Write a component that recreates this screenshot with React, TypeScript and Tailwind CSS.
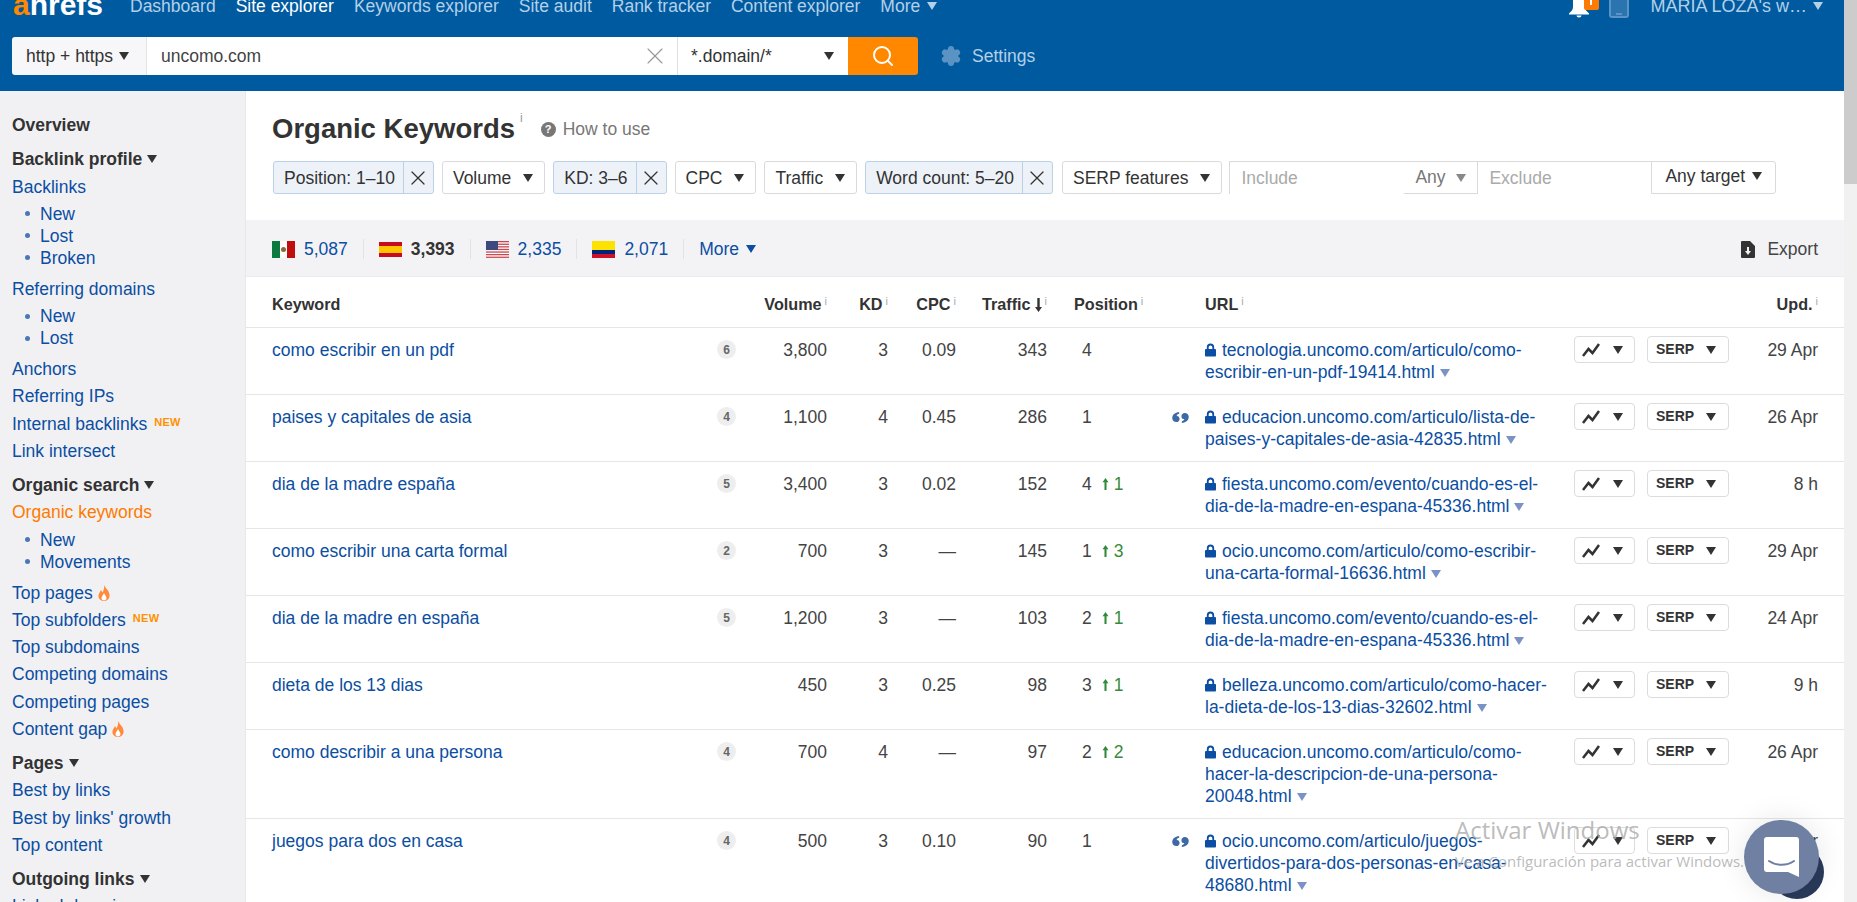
import { Search, X, Settings } from "lucide-react";

const font = "font-['Liberation_Sans',Arial,sans-serif]";

function Caret({ className = "" }: { className?: string }) {
  return (
    <svg viewBox="0 0 10 8" className={`inline-block w-[10px] h-[8px] fill-current ${className}`}>
      <path d="M0 0h10L5 8z" />
    </svg>
  );
}

function Info() {
  return <sup className="text-[11px] font-normal text-[#aaa] ml-[3px] -top-[5px]">i</sup>;
}

function Lock() {
  return (
    <svg viewBox="0 0 12 14" className="inline-block w-[11px] h-[14px] mr-[6px] -mt-[3px] align-middle fill-[#0b4ea2]">
      <path fillRule="evenodd" d="M2 6V4a4 4 0 0 1 8 0v2h1a1 1 0 0 1 1 1v6a1 1 0 0 1-1 1H1a1 1 0 0 1-1-1V7a1 1 0 0 1 1-1zm2 0h4V4a2 2 0 0 0-4 0z" />
    </svg>
  );
}

function Quote() {
  return (
    <svg viewBox="0 0 18 12" className="w-[17px] h-[11px] mt-[6px] fill-[#3d6aa5]">
      <path d="M7.500 0v2C5.800 2.300 5 3.200 4.900 4.300 6.600 4.200 8 5.500 8 7.500S6.500 11 4.300 11 0 9.300 0 6.800C0 3 3 .4 7.500 0zM10.500 12v-2c1.700-.3 2.500-1.200 2.600-2.300-1.700.1-3.100-1.200-3.100-3.200S11.500 1 13.700 1 18 2.700 18 5.200C18 9 15 11.600 10.500 12z" />
    </svg>
  );
}

function Fire() {
  return (
    <svg viewBox="0 0 12 16" className="ml-[5px] w-[12px] h-[16px]">
      <path fill="#ff8a3c" d="M6 0c1 3 5 5 5.500 9.500C12 13.500 9.500 16 6 16S0 13.500.5 10C1 7.500 2.500 6.500 3 5c.8 1 1 2 1.500 2.500C5.500 5.500 6.500 3 6 0z" />
      <path fill="#fff" d="M6 8c.5 2 2.500 3 2.500 5 0 1.500-1 2.500-2.500 2.500S3.500 14.500 3.500 13C3.500 11 5.500 10 6 8z" />
    </svg>
  );
}

const nav = ["Dashboard", "Site explorer", "Keywords explorer", "Site audit", "Rank tracker", "Content explorer"];

function TopBar() {
  return (
    <header className="h-[91px] bg-[#005aa0] shrink-0 relative">
      <div className="h-[37px] flex items-start">
        <div className="w-[130px] pl-[13px] -mt-[10px] text-[30px] leading-[29px] font-bold text-white">
          <span className="text-[#ff8800]">a</span>hrefs
        </div>
        <nav className="flex gap-[20px] text-[17.5px] leading-[15px] text-[#b3d0e8] -mt-[1px]">
          {nav.map((n) => (
            <span key={n} className={n === "Site explorer" ? "text-white" : ""}>{n}</span>
          ))}
          <span>More <Caret className="w-[9px] h-[7px] ml-[2px] align-[2px]" /></span>
        </nav>
        <div className="ml-auto flex items-start text-[18px] leading-[15px] text-[#b3d0e8] pr-[21px] -mt-[1px]">
          <div className="relative w-[30px] h-[18px] mr-[10px] mt-[1px]">
            <svg viewBox="0 0 20 18" className="w-[20px] h-[18px] fill-white">
              <path d="M4 0h12v7c0 3 2 4.500 4 6.500v1H0v-1C2 11.500 4 10 4 7zM7.500 15.500h5a2.500 2 0 0 1-5 0z" />
            </svg>
            <span className="absolute -top-[1px] left-[15px] w-[15px] h-[11px] bg-[#ff7a00] rounded-b-[2px] flex justify-center">
              <span className="w-[2px] h-[6px] bg-white" />
            </span>
          </div>
          <div className="w-[20px] h-[18px] mr-[22px] mt-[1px] rounded-b-[3px] border-2 border-t-0 border-[#5b93c4] bg-[#2a74b0] flex items-end justify-center">
            <span className="w-[6px] h-[2px] bg-[#5b93c4] mb-[1px]" />
          </div>
          <span>MARIA LOZA's w…</span>
          <Caret className="ml-[6px] mt-[3px]" />
        </div>
      </div>
      <div className="flex items-center pl-[12px]">
        <div className="flex h-[38px] w-[906px] rounded-[3px] overflow-hidden text-[17.5px] text-[#333]">
          <div className="w-[135px] bg-[#f7f7f9] flex items-center pl-[14px] border-r border-[#e5e5e5]">
            http + https <Caret className="ml-[6px]" />
          </div>
          <div className="flex-1 bg-white flex items-center pl-[14px] pr-[8px] text-[#444]">
            uncomo.com
            <X className="ml-auto w-[28px] h-[28px] text-[#999]" strokeWidth={1} />
          </div>
          <div className="w-[171px] bg-white border-l border-[#e0e0e0] flex items-center pl-[13px] pr-[14px]">
            *.domain/*
            <Caret className="ml-auto" />
          </div>
          <div className="w-[70px] bg-[#ff8800] flex items-center justify-center">
            <Search className="w-[24px] h-[24px] text-white" strokeWidth={2} />
          </div>
        </div>
        <Settings className="w-[22px] h-[22px] ml-[22px] text-[#5b93c4] fill-[#5b93c4]" />
        <span className="ml-[10px] text-[17.5px] text-[#b3d0e8]">Settings</span>
      </div>
    </header>
  );
}

type SideItem = { t: string; kind: "head" | "link" | "sub" | "active"; gap?: number; tag?: "new" | "fire"; caret?: boolean };

const side: SideItem[] = [
  { t: "Overview", kind: "head" },
  { t: "Backlink profile", kind: "head", caret: true },
  { t: "Backlinks", kind: "link" },
  { t: "New", kind: "sub" },
  { t: "Lost", kind: "sub" },
  { t: "Broken", kind: "sub" },
  { t: "Referring domains", kind: "link", gap: 5 },
  { t: "New", kind: "sub" },
  { t: "Lost", kind: "sub" },
  { t: "Anchors", kind: "link", gap: 5 },
  { t: "Referring IPs", kind: "link" },
  { t: "Internal backlinks", kind: "link", tag: "new" },
  { t: "Link intersect", kind: "link" },
  { t: "Organic search", kind: "head", caret: true },
  { t: "Organic keywords", kind: "active" },
  { t: "New", kind: "sub" },
  { t: "Movements", kind: "sub" },
  { t: "Top pages", kind: "link", gap: 5, tag: "fire" },
  { t: "Top subfolders", kind: "link", tag: "new" },
  { t: "Top subdomains", kind: "link" },
  { t: "Competing domains", kind: "link" },
  { t: "Competing pages", kind: "link" },
  { t: "Content gap", kind: "link", tag: "fire" },
  { t: "Pages", kind: "head", caret: true },
  { t: "Best by links", kind: "link" },
  { t: "Best by links' growth", kind: "link" },
  { t: "Top content", kind: "link" },
  { t: "Outgoing links", kind: "head", caret: true },
  { t: "Linked domains", kind: "link" },
];

function Sidebar() {
  return (
    <aside className="w-[246px] shrink-0 bg-[#f1f1f4] pl-[12px] pt-[21px] text-[17.5px] leading-[27.25px] border-r border-[#e8e8e8]">
      {side.map((s, i) => {
        if (s.kind === "head") {
          return (
            <div key={i} className={`font-bold text-[#333] ${i > 0 ? "mt-[7px]" : ""}`}>
              {s.t}
              {s.caret && <Caret className="ml-[5px] w-[9px] h-[7px] align-[2px]" />}
            </div>
          );
        }
        if (s.kind === "sub") {
          return (
            <div key={i} className={`leading-[22px] pl-[13px] flex items-center text-[#0b4ea2] ${side[i - 1].kind !== "sub" ? "mt-[2px]" : ""}`}>
              <span className="w-[5px] h-[5px] rounded-full bg-[#4a78b4] mr-[10px]" />
              {s.t}
            </div>
          );
        }
        return (
          <div
            key={i}
            className={`flex items-center ${s.kind === "active" ? "text-[#ff7a00]" : "text-[#0b4ea2]"} ${s.gap ? "mt-[7px]" : ""}`}
          >
            {s.t}
            {s.tag === "new" && <span className="ml-[7px] -mt-[3px] text-[11px] font-bold leading-none tracking-wide text-[#ff9200]">NEW</span>}
            {s.tag === "fire" && <Fire />}
          </div>
        );
      })}
    </aside>
  );
}

function Chip({ label, active }: { label: string; active?: boolean }) {
  if (active) {
    return (
      <div className="flex h-[33px] items-center rounded-[3px] border border-[#bcd0e6] bg-[#edf2f9] text-[#333]">
        <span className="pl-[10px] pr-[8px] pt-[1px] h-full flex items-center border-r border-[#bcd0e6]">{label}</span>
        <span className="w-[29px] flex justify-center">
          <X className="w-[24px] h-[24px] text-[#333]" strokeWidth={1.2} />
        </span>
      </div>
    );
  }
  return (
    <div className="flex h-[33px] items-center rounded-[3px] border border-[#dadada] bg-white pl-[10px] pr-[11px] pt-[1px] text-[#333]">
      {label}
      <Caret className="ml-[12px]" />
    </div>
  );
}

function Filters() {
  return (
    <div className="flex items-center gap-[8px] mt-[13px] pl-[27px] text-[17.5px]">
      <Chip label="Position: 1–10" active />
      <Chip label="Volume" />
      <Chip label="KD: 3–6" active />
      <Chip label="CPC" />
      <Chip label="Traffic" />
      <Chip label="Word count: 5–20" active />
      <div className="ml-[1px]">
        <Chip label="SERP features" />
      </div>
      <div className="flex h-[33px] w-[547px] -ml-[1px] items-stretch text-[#aaa]">
        <div className="w-[175px] pl-[11px] flex items-center border-t border-l border-[#dadada]">Include</div>
        <div className="w-[74px] pl-[11px] flex items-center border-t border-b border-r border-[#dadada] text-[#777]">
          Any <Caret className="ml-[10px] text-[#888]" />
        </div>
        <div className="w-[173px] pl-[11px] flex items-center border-t border-[#dadada]">Exclude</div>
        <div className="w-[125px] pl-[13px] pb-[3px] flex items-center border border-[#dadada] rounded-r-[3px] text-[#333]">
          Any target <Caret className="ml-[7px]" />
        </div>
      </div>
    </div>
  );
}

function FlagMx() {
  return (
    <div className="flex w-[23px] h-[17px]">
      <span className="flex-1 bg-[#0b7a3e]" />
      <span className="flex-1 bg-white flex items-center justify-center">
        <span className="w-[5px] h-[5px] rounded-full bg-[#8a6a3a]" />
      </span>
      <span className="flex-1 bg-[#c00d0d]" />
    </div>
  );
}
function FlagEs() {
  return (
    <div className="flex flex-col w-[23px] h-[15px]">
      <span className="h-[4px] bg-[#c60b1e]" />
      <span className="flex-1 bg-[#ffc400]" />
      <span className="h-[4px] bg-[#c60b1e]" />
    </div>
  );
}
function FlagUs() {
  return (
    <svg viewBox="0 0 23 17" className="w-[23px] h-[17px]">
      <rect width="23" height="17" fill="#fff" />
      {[0, 2.6, 5.2, 7.8, 10.4, 13, 15.6].map((y) => (
        <rect key={y} y={y} width="23" height="1.3" fill="#c8484f" />
      ))}
      <rect width="12" height="9" fill="#3c4a80" />
    </svg>
  );
}
function FlagCo() {
  return (
    <div className="flex flex-col w-[23px] h-[17px]">
      <span className="h-[9px] bg-[#fde100]" />
      <span className="h-[4px] bg-[#00247d]" />
      <span className="h-[4px] bg-[#ce1126]" />
    </div>
  );
}

function CountryBar() {
  const items = [
    { flag: <FlagMx />, n: "5,087" },
    { flag: <FlagEs />, n: "3,393", on: true },
    { flag: <FlagUs />, n: "2,335" },
    { flag: <FlagCo />, n: "2,071" },
  ];
  return (
    <div className="h-[57px] bg-[#f3f3f6] border-b border-[#ececec] mt-[26px] pt-[2px] flex items-center pl-[26px] pr-[26px] text-[17.5px]">
      {items.map((c) => (
        <div key={c.n} className="flex items-center h-[20px] pr-[15px] mr-[15px] border-r border-[#e2e2e2]">
          <span className="mr-[9px]">{c.flag}</span>
          <span className={c.on ? "font-bold text-[#333]" : "text-[#0b4ea2]"}>{c.n}</span>
        </div>
      ))}
      <span className="text-[#0b4ea2]">More <Caret className="ml-[2px] w-[9px] h-[7px] align-[2px]" /></span>
      <div className="ml-auto flex items-center text-[#444]">
        <svg viewBox="0 0 14 17" className="w-[14px] h-[17px] mr-[12px] fill-[#333]">
          <path d="M1 0h8l5 5v11a1 1 0 0 1-1 1H1a1 1 0 0 1-1-1V1a1 1 0 0 1 1-1zm5 6v4H4l3 4 3-4H8V6z" fillRule="evenodd" />
        </svg>
        Export
      </div>
    </div>
  );
}

type Row = { kw: string; n: string; vol: string; kd: string; cpc: string; tr: string; pos: string; up?: string; quote?: boolean; url: string; upd: string };

const rows: Row[] = [
  { kw: "como escribir en un pdf", n: "6", vol: "3,800", kd: "3", cpc: "0.09", tr: "343", pos: "4", url: "tecnologia.uncomo.com/articulo/como-escribir-en-un-pdf-19414.html", upd: "29 Apr" },
  { kw: "paises y capitales de asia", n: "4", vol: "1,100", kd: "4", cpc: "0.45", tr: "286", pos: "1", quote: true, url: "educacion.uncomo.com/articulo/lista-de-paises-y-capitales-de-asia-42835.html", upd: "26 Apr" },
  { kw: "dia de la madre españa", n: "5", vol: "3,400", kd: "3", cpc: "0.02", tr: "152", pos: "4", up: "1", url: "fiesta.uncomo.com/evento/cuando-es-el-dia-de-la-madre-en-espana-45336.html", upd: "8 h" },
  { kw: "como escribir una carta formal", n: "2", vol: "700", kd: "3", cpc: "—", tr: "145", pos: "1", up: "3", url: "ocio.uncomo.com/articulo/como-escribir-una-carta-formal-16636.html", upd: "29 Apr" },
  { kw: "dia de la madre en españa", n: "5", vol: "1,200", kd: "3", cpc: "—", tr: "103", pos: "2", up: "1", url: "fiesta.uncomo.com/evento/cuando-es-el-dia-de-la-madre-en-espana-45336.html", upd: "24 Apr" },
  { kw: "dieta de los 13 dias", n: "", vol: "450", kd: "3", cpc: "0.25", tr: "98", pos: "3", up: "1", url: "belleza.uncomo.com/articulo/como-hacer-la-dieta-de-los-13-dias-32602.html", upd: "9 h" },
  { kw: "como describir a una persona", n: "4", vol: "700", kd: "4", cpc: "—", tr: "97", pos: "2", up: "2", url: "educacion.uncomo.com/articulo/como-hacer-la-descripcion-de-una-persona-20048.html", upd: "26 Apr" },
  { kw: "juegos para dos en casa", n: "4", vol: "500", kd: "3", cpc: "0.10", tr: "90", pos: "1", quote: true, url: "ocio.uncomo.com/articulo/juegos-divertidos-para-dos-personas-en-casa-48680.html", upd: "7 Apr" },
];

const cols = "grid grid-cols-[444px_19px_92px_61px_68px_91px_125px_33px_369px_73px_82px_89px] pl-[26px]";

function TableHead() {
  return (
    <div className={`${cols} h-[51px] pt-[5px] items-center border-b border-[#e6e6e6] text-[16.2px] font-bold text-[#333]`}>
      <div>Keyword</div>
      <div />
      <div className="text-right">Volume<Info /></div>
      <div className="text-right">KD<Info /></div>
      <div className="text-right">CPC<Info /></div>
      <div className="text-right">
        Traffic
        <svg viewBox="0 0 7 14" className="inline-block w-[7px] h-[14px] ml-[4px] -mt-[2px] align-middle fill-[#333]">
          <path d="M2.300 0h2.400v9H7l-3.500 5L0 9h2.300z" />
        </svg>
        <Info />
      </div>
      <div className="pl-[27px]">Position<Info /></div>
      <div />
      <div>URL<Info /></div>
      <div />
      <div />
      <div className="text-right">Upd.<Info /></div>
    </div>
  );
}

function TableRow({ r }: { r: Row }) {
  return (
    <div className={`${cols} pt-[11px] pb-[11px] border-b border-[#e6e6e6] text-[17.5px] leading-[22px] text-[#444]`}>
      <div className="text-[#0b4ea2]">{r.kw}</div>
      <div>
        {r.n && (
          <span className="flex w-[19px] h-[19px] mt-[1px] ml-[1px] items-center justify-center rounded-full bg-[#eee] text-[12px] font-bold text-[#666]">{r.n}</span>
        )}
      </div>
      <div className="text-right">{r.vol}</div>
      <div className="text-right">{r.kd}</div>
      <div className="text-right">{r.cpc}</div>
      <div className="text-right">{r.tr}</div>
      <div className="pl-[35px]">
        {r.pos}
        {r.up && (
          <span className="ml-[10px] text-[#3a8a3a]">
            <svg viewBox="0 0 7 14" className="inline-block w-[7px] h-[12px] mr-[5px] -mt-[3px] align-middle fill-[#2f8a3a]">
              <path d="M2.300 14h2.400V5H7L3.500 0 0 5h2.300z" />
            </svg>
            {r.up}
          </span>
        )}
      </div>
      <div>{r.quote && <Quote />}</div>
      <div className="pr-[21px] text-[#0b4ea2]">
        <Lock />
        {r.url}
        <Caret className="ml-[5px] text-[#7b92c4]" />
      </div>
      <div>
        <div className="flex w-[61px] h-[27px] -mt-[3px] items-center rounded-[4px] border border-[#dcdcdc] pl-[7px] text-[#333]">
          <svg viewBox="0 0 18 14" className="w-[18px] h-[14px] fill-none stroke-[#333] stroke-[2.5]">
            <path d="M1 13L6.500 6l4 4L17 1" />
          </svg>
          <Caret className="ml-[13px]" />
        </div>
      </div>
      <div>
        <div className="flex w-[82px] h-[27px] -mt-[3px] items-center rounded-[4px] border border-[#dcdcdc] pl-[8px] text-[14px] font-bold text-[#333]">
          <span className="-mt-[2px]">SERP</span>
          <Caret className="ml-[12px]" />
        </div>
      </div>
      <div className="text-right">{r.upd}</div>
    </div>
  );
}

function Main() {
  return (
    <main className="flex-1 min-w-0 bg-white">
      <div className="pl-[26px] pt-[18px] flex items-center h-[57px]">
        <h1 className="text-[27.5px] font-bold leading-none text-[#333]">Organic Keywords</h1>
        <sup className="text-[12px] text-[#999] ml-[5px] -mt-[10px]">i</sup>
        <span className="ml-[18px] pt-[2px] flex items-center text-[17.5px] text-[#777]">
          <span className="w-[15px] h-[15px] mr-[7px] rounded-full bg-[#777] text-white text-[11px] font-bold leading-[15px] text-center">?</span>
          How to use
        </span>
      </div>
      <Filters />
      <CountryBar />
      <TableHead />
      {rows.map((r) => (
        <TableRow key={r.kw} r={r} />
      ))}
    </main>
  );
}

export default function App() {
  return (
    <div className={`${font} relative h-[902px] overflow-hidden flex`}>
      <div className="flex-1 min-w-0 flex flex-col">
        <TopBar />
        <div className="flex flex-1 min-h-0 overflow-hidden">
          <Sidebar />
          <Main />
        </div>
      </div>
      <div className="w-[13px] shrink-0 bg-[#f1f1f1]">
        <div className="h-[184px] bg-[#cccccc]" />
      </div>

      {/* watermark + chat widget over the page */}
      <div className="absolute left-[1455px] top-[815px] text-[#aaa]/80 font-['Open_Sans',sans-serif] pointer-events-none">
        <div className="text-[24px] leading-[30px]">Activar Windows</div>
        <div className="text-[15px] leading-[24px] mt-[4px] whitespace-nowrap">Ve a Configuración para activar Windows.</div>
      </div>
      <div className="absolute left-[1770px] top-[845px] w-[54px] h-[54px] rounded-full bg-[#2a3a5a]" />
      <div className="absolute left-[1744px] top-[820px] w-[75px] h-[74px] rounded-full bg-[#6f80a2] shadow-[0_0_30px_rgba(0,0,0,0.1)] flex items-center justify-center">
        <svg viewBox="0 0 35 40" className="w-[35px] h-[40px]">
          <path d="M3 0h29a3 3 0 0 1 3 3v37l-11-5H3a3 3 0 0 1-3-3V3a3 3 0 0 1 3-3z" fill="#fff" />
          <path d="M5 24c7 5 18 5 25 0" fill="none" stroke="#6f80a2" strokeWidth="2" strokeLinecap="round" />
        </svg>
      </div>
    </div>
  );
}
